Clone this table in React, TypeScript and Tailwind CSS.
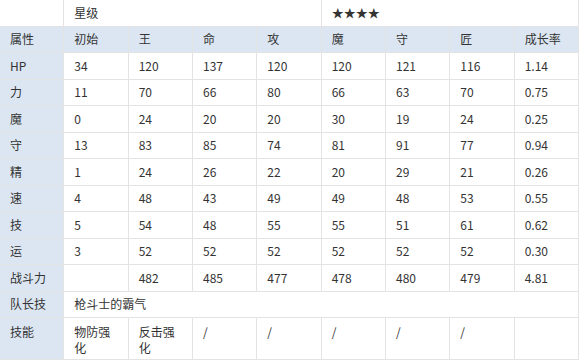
const HEADER = ['属性', '初始', '王', '命', '攻', '魔', '守', '匠', '成长率'];

const ROWS: string[][] = [
  ['HP', '34', '120', '137', '120', '120', '121', '116', '1.14'],
  ['力', '11', '70', '66', '80', '66', '63', '70', '0.75'],
  ['魔', '0', '24', '20', '20', '30', '19', '24', '0.25'],
  ['守', '13', '83', '85', '74', '81', '91', '77', '0.94'],
  ['精', '1', '24', '26', '22', '20', '29', '21', '0.26'],
  ['速', '4', '48', '43', '49', '49', '48', '53', '0.55'],
  ['技', '5', '54', '48', '55', '55', '51', '61', '0.62'],
  ['运', '3', '52', '52', '52', '52', '52', '52', '0.30'],
  ['战斗力', '', '482', '485', '477', '478', '480', '479', '4.81'],
];

const SKILLS = ['物防强化', '反击强化', '/', '/', '/', '/', '/', ''];

const cell = 'flex items-center border-r border-b border-[#e3e3e3] px-[10px] leading-[16px]';
const label = `${cell} bg-[#dce6f2]`;
const topCell = 'border-r border-b border-[#e3e3e3] px-[10px] pt-[6px] leading-[16px]';

export default function App() {
  return (
    <div
      className="w-[580px] h-[362px] bg-white overflow-hidden text-[12px] text-[#333]"
      style={{ fontFamily: '"Noto Sans CJK SC", "Noto Sans", sans-serif' }}
    >
      <div className="grid w-[579px] grid-cols-9 grid-rows-[repeat(12,26.5px)_42px]">
        <div className={cell}></div>
        <div className={`${cell} col-span-4`}>星级</div>
        <div className={`${cell} col-span-4`}>★★★★</div>

        {HEADER.map((h, i) => (
          <div key={i} className={label}>{h}</div>
        ))}

        {ROWS.map((row) =>
          row.map((v, i) => (
            <div key={row[0] + i} className={i === 0 ? label : cell}>{v}</div>
          ))
        )}

        <div className={label}>队长技</div>
        <div className={`${cell} col-span-8`}>枪斗士的霸气</div>

        <div className={`${topCell} bg-[#dce6f2]`}>技能</div>
        {SKILLS.map((s, i) => (
          <div key={i} className={topCell}>{s}</div>
        ))}
      </div>
    </div>
  );
}
